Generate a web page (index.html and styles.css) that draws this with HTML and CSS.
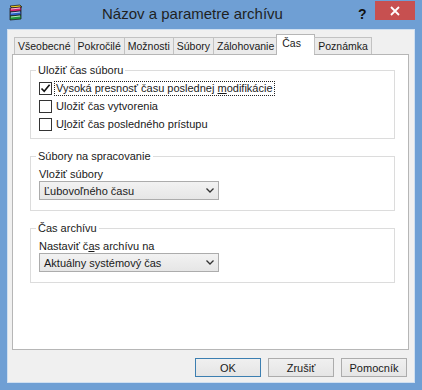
FILE: index.html
```html
<!DOCTYPE html>
<html lang="sk">
<head>
    <meta charset="UTF-8">
    <title>Názov a parametre archívu</title>
    <link rel="stylesheet" href="styles.css">
</head>
<body>

<div class="window">
    <div class="titlebar">
        <svg class="app-icon" width="18" height="18" viewBox="0 0 18 18">
            <path d="M3 2 L13 1 L15 3 L5 4 Z" fill="#f5d21c" stroke="#222" stroke-width="0.8"/>
            <path d="M3 4 L14 3 L14 7 L3 8 Z" fill="#d4206e" stroke="#222" stroke-width="0.8"/>
            <path d="M3 8 L14 7 L14 11 L3 12 Z" fill="#2a5fc8" stroke="#222" stroke-width="0.8"/>
            <path d="M3 12 L14 11 L14 15 L3 16 Z" fill="#1f9a3a" stroke="#222" stroke-width="0.8"/>
            <path d="M4 5 L13 4 M4 9 L13 8 M4 13 L13 12" stroke="#fff" stroke-width="0.7"/>
        </svg>
        <div class="title">Názov a parametre archívu</div>
        <div class="help">?</div>
        <div class="close">
            <svg width="10" height="10" viewBox="0 0 10 10">
                <path d="M1 1 L9 9 M9 1 L1 9" stroke="#fff" stroke-width="1.8"/>
            </svg>
        </div>
    </div>

    <div class="client">
        <div class="tabs">
            <div class="tab">Všeobecné</div>
            <div class="tab">Pokročilé</div>
            <div class="tab">Možnosti</div>
            <div class="tab">Súbory</div>
            <div class="tab">Zálohovanie</div>
            <div class="tab active">Čas</div>
            <div class="tab">Poznámka</div>
        </div>

        <div class="panel">
            <fieldset class="group group-file">
                <legend>Uložiť čas súboru</legend>
                <div class="check-row">
                    <span class="checkbox">
                        <svg width="11" height="11" viewBox="0 0 11 11">
                            <path d="M1.5 5.5 L4.2 8.3 L9.6 1.8" fill="none" stroke="#111" stroke-width="1.6"/>
                        </svg>
                    </span>
                    <span class="check-label focused">Vysoká presnosť času poslednej <u>m</u>odifikácie</span>
                </div>
                <div class="check-row">
                    <span class="checkbox"></span>
                    <span class="check-label">Uložiť čas vytvorenia</span>
                </div>
                <div class="check-row">
                    <span class="checkbox"></span>
                    <span class="check-label">U<u>l</u>ožiť čas posledného prístupu</span>
                </div>
            </fieldset>

            <fieldset class="group">
                <legend>Súbory na spracovanie</legend>
                <div class="field-label">Vložiť súbory</div>
                <div class="combo">
                    <span>Ľubovoľného času</span>
                    <svg width="8" height="5" viewBox="0 0 8 5">
                        <path d="M0.5 0.5 L4 4 L7.5 0.5" fill="none" stroke="#333" stroke-width="1.3"/>
                    </svg>
                </div>
            </fieldset>

            <fieldset class="group">
                <legend>Čas archívu</legend>
                <div class="field-label">Nastaviť č<u>a</u>s archívu na</div>
                <div class="combo">
                    <span>Aktuálny systémový čas</span>
                    <svg width="8" height="5" viewBox="0 0 8 5">
                        <path d="M0.5 0.5 L4 4 L7.5 0.5" fill="none" stroke="#333" stroke-width="1.3"/>
                    </svg>
                </div>
            </fieldset>
        </div>

        <div class="buttons">
            <button type="button" class="btn default">OK</button>
            <button type="button" class="btn">Zrušiť</button>
            <button type="button" class="btn">Pomocník</button>
        </div>
    </div>
</div>

</body>
</html>
```

FILE: styles.css
```css
body {
    margin: 0;
    padding: 0;
    font-family: "Liberation Sans", Arial, sans-serif;
    font-size: 11px;
    color: #1a1a1a;
    background-color: #6f9fd4;
}

.window {
    width: 422px;
    height: 390px;
    display: flex;
    flex-direction: column;
    background-color: #6f9fd4;
}

.titlebar {
    height: 29px;
    display: flex;
    align-items: flex-start;
}

.app-icon {
    margin: 4px 0 0 7px;
}

.title {
    flex: 1;
    text-align: center;
    font-size: 15px;
    line-height: 28px;
    color: #1f1f1f;
    padding-left: 2px;
}

.help {
    width: 14px;
    margin: 7px 3px 0 0;
    font-size: 14px;
    font-weight: bold;
    line-height: 14px;
    color: #111;
}

.close {
    width: 40px;
    height: 19px;
    margin: 1px 7px 0 0;
    background-color: #c75050;
    display: flex;
    align-items: center;
    justify-content: center;
}

.client {
    flex: 1;
    margin: 0 7px 7px 7px;
    border: 1px solid #cfdff0;
    background-color: #f0f0f0;
    display: flex;
    flex-direction: column;
    padding: 7px 0 5px 0;
}

.tabs {
    display: flex;
    align-items: flex-end;
    height: 17px;
    padding-left: 6px;
    position: relative;
    z-index: 1;
}

.tab {
    height: 16px;
    line-height: 16px;
    padding: 0 3px;
    margin-right: -1px;
    border: 1px solid #c2c2c2;
    border-bottom: none;
    background-color: #ebebeb;
    font-size: 10.5px;
    white-space: nowrap;
}

.tab.active {
    height: 20px;
    line-height: 16px;
    min-width: 27px;
    margin: 0 -1px -1px -1px;
    padding: 0 5px 0 5px;
    background-color: #fff;
    border-color: #b6b6b6;
}

.panel {
    flex: 1;
    margin: 0 5px 0 4px;
    border: 1px solid #b6b6b6;
    background-color: #fff;
    padding: 9px 13px 0 17px;
}

.group {
    margin: 0 0 11px 0;
    padding: 0 0 0 8px;
    border: 1px solid #dcdcdc;
    min-width: 0;
}

.group legend {
    padding: 0 2px;
    margin-left: -3px;
    line-height: 13px;
}

.group-file {
    padding: 2px 0 5px 8px;
}

.check-row {
    display: flex;
    align-items: center;
    height: 18px;
}

.checkbox {
    width: 11px;
    height: 11px;
    border: 1px solid #333;
    background-color: #fff;
    margin-right: 2px;
    display: flex;
    align-items: center;
    justify-content: center;
}

.check-label {
    padding: 0 1px;
    border: 1px solid transparent;
    line-height: 13px;
}

.check-label.focused {
    border: 1px dotted #222;
}

.field-label {
    margin-top: 5px;
    line-height: 13px;
}

.combo {
    height: 17px;
    margin: 0 0 10px 0;
    border: 1px solid #acacac;
    background: linear-gradient(#f2f2f2, #e6e6e6);
    display: flex;
    align-items: center;
    justify-content: space-between;
    padding: 0 4px 0 4px;
    box-sizing: content-box;
}

.group .combo {
    width: 170px;
}

.buttons {
    display: flex;
    justify-content: flex-end;
    gap: 7px;
    margin: 8px 7px 0 0;
}

.btn {
    width: 66px;
    height: 19px;
    padding: 0;
    font-family: "Liberation Sans", Arial, sans-serif;
    font-size: 11px;
    color: #1a1a1a;
    background: linear-gradient(#f0f0f0, #e5e5e5);
    border: 1px solid #acacac;
    border-radius: 0;
}

.btn.default {
    border-color: #3c7fb1;
}
```
